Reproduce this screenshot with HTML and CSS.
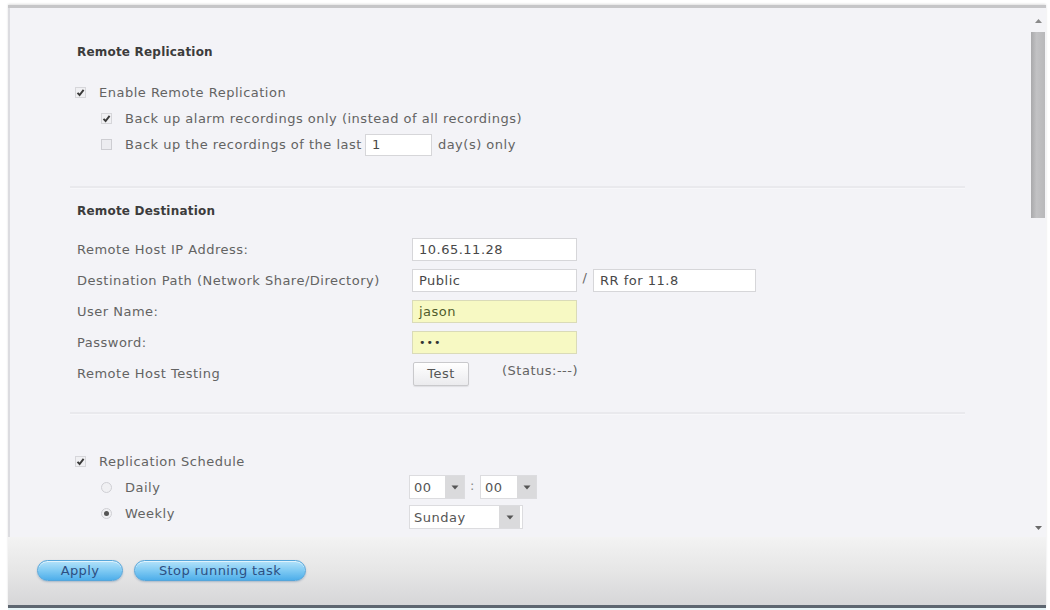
FILE: index.html
```html
<!DOCTYPE html>
<html>
<head>
<meta charset="utf-8">
<link rel="stylesheet" href="styles.css">
</head>
<body>
<div class="window">
  <div class="body">
    <div class="main">
      <section class="sec sec-rep">
        <h2 class="heading">Remote Replication</h2>
        <div class="opt">
          <span class="cb checked"><svg viewBox="0 0 11 11" width="11" height="11"><path d="M2.5 5.8 L4.6 8 L8.6 2.8" fill="none" stroke="#3a3a3a" stroke-width="1.9"/></svg></span>
          <span class="opt-text">Enable Remote Replication</span>
        </div>
        <div class="opt sub">
          <span class="cb checked"><svg viewBox="0 0 11 11" width="11" height="11"><path d="M2.5 5.8 L4.6 8 L8.6 2.8" fill="none" stroke="#3a3a3a" stroke-width="1.9"/></svg></span>
          <span class="opt-text">Back up alarm recordings only (instead of all recordings)</span>
        </div>
        <div class="opt sub opt-last">
          <span class="cb"></span>
          <span class="opt-text">Back up the recordings of the last</span>
          <span class="field days">1</span>
          <span class="opt-text after">day(s) only</span>
        </div>
      </section>

      <div class="divider"></div>

      <section class="sec sec-dest">
        <h2 class="heading">Remote Destination</h2>
        <div class="form-grid">
          <div class="label">Remote Host IP Address:</div>
          <div class="ctrl"><span class="field w165">10.65.11.28</span></div>

          <div class="label">Destination Path (Network Share/Directory)</div>
          <div class="ctrl"><span class="field w165">Public</span><span class="slash">/</span><span class="field w163">RR for 11.8</span></div>

          <div class="label">User Name:</div>
          <div class="ctrl"><span class="field w165 yellow">jason</span></div>

          <div class="label">Password:</div>
          <div class="ctrl"><span class="field w165 yellow dots">&bull;&bull;&bull;</span></div>

          <div class="label">Remote Host Testing</div>
          <div class="ctrl"><span class="btn-test">Test</span><span class="status">(Status:---)</span></div>
        </div>
      </section>

      <div class="divider"></div>

      <section class="sec sec-sched">
        <div class="opt">
          <span class="cb checked"><svg viewBox="0 0 11 11" width="11" height="11"><path d="M2.5 5.8 L4.6 8 L8.6 2.8" fill="none" stroke="#3a3a3a" stroke-width="1.9"/></svg></span>
          <span class="opt-text">Replication Schedule</span>
        </div>
        <div class="sched-grid">
          <div class="opt sub"><span class="radio"></span><span class="opt-text">Daily</span></div>
          <div class="ctrl sel-row">
            <span class="select s56"><span class="sel-val">00</span><span class="sel-arrow"><svg viewBox="0 0 8 5" width="8" height="5"><path d="M0.5 0.5 L4 4.5 L7.5 0.5 Z" fill="#555"/></svg></span></span>
            <span class="colon">:</span>
            <span class="select s57"><span class="sel-val">00</span><span class="sel-arrow"><svg viewBox="0 0 8 5" width="8" height="5"><path d="M0.5 0.5 L4 4.5 L7.5 0.5 Z" fill="#555"/></svg></span></span>
          </div>
          <div class="opt sub"><span class="radio on"></span><span class="opt-text">Weekly</span></div>
          <div class="ctrl sel-row">
            <span class="select s114"><span class="sel-val">Sunday</span><span class="sel-arrow"><svg viewBox="0 0 8 5" width="8" height="5"><path d="M0.5 0.5 L4 4.5 L7.5 0.5 Z" fill="#555"/></svg></span></span>
          </div>
        </div>
      </section>
    </div>
    <div class="scrollbar">
      <span class="sb-arrow"><svg viewBox="0 0 7 4" width="7" height="4"><path d="M0 4 L3.5 0 L7 4 Z" fill="#8a8a8a"/></svg></span>
      <div class="thumb"></div>
      <div class="track-rest"></div>
      <span class="sb-arrow"><svg viewBox="0 0 7 4" width="7" height="4"><path d="M0 0 L3.5 4 L7 0 Z" fill="#6a6a6a"/></svg></span>
    </div>
  </div>
  <div class="footer">
    <button class="pill apply">Apply</button>
    <button class="pill stop">Stop running task</button>
  </div>
</div>
</body>
</html>
```
FILE: styles.css
```css
html, body {
  margin: 0;
  padding: 0;
  background: #ffffff;
  width: 1050px;
  height: 610px;
  overflow: hidden;
}

body {
  font-family: "DejaVu Sans", Verdana, sans-serif;
  font-size: 13px;
  letter-spacing: 0.5px;
  color: #636363;
}

.window {
  margin: 5px 0 0 8px;
  width: 1038px;
  height: 600px;
  display: flex;
  flex-direction: column;
  border-top: 3px solid #c6c6c8;
  box-shadow: 0 -1px 2px rgba(0,0,0,0.12);
  background: #f3f3f7;
}

.body {
  flex: 1;
  display: flex;
  min-height: 0;
  border-left: 2px solid #dcdce0;
}

.main {
  flex: 1;
  padding: 34px 0 0 67px;
  overflow: hidden;
}

.heading {
  margin: 0;
  font-size: 12px;
  letter-spacing: 0.2px;
  font-weight: bold;
  color: #3c3c3c;
  line-height: 20px;
  height: 20px;
}

.sec-rep .heading { margin-bottom: 17px; }

.opt {
  display: flex;
  align-items: center;
  height: 26px;
}

.opt-last { height: 27px; }

.opt.sub { padding-left: 26px; }

.cb {
  width: 11px;
  height: 11px;
  box-sizing: border-box;
  border: 1px solid #cdcdd2;
  background: #ececf0;
  margin-left: -2px;
  margin-right: 13px;
  display: flex;
  flex: none;
}

.cb.checked { border-color: #d6d6da; background: #f0f0f3; }
.cb svg { display: block; margin: -1px; }

.radio {
  width: 11px;
  height: 11px;
  box-sizing: border-box;
  border-radius: 50%;
  border: 1px solid #cfcfd4;
  background: #f0f0f3;
  margin-left: -2px;
  margin-right: 13px;
  flex: none;
  display: flex;
  align-items: center;
  justify-content: center;
}

.radio.on::after {
  content: "";
  width: 5px;
  height: 5px;
  border-radius: 50%;
  background: #555;
}

.opt-text { white-space: nowrap; }
.opt-text.after { margin-left: 6px; }

.field {
  display: inline-flex;
  align-items: center;
  box-sizing: border-box;
  height: 23px;
  padding-left: 6px;
  background: #ffffff;
  border: 1px solid #d6d6d9;
  color: #484848;
  white-space: nowrap;
}

.field.days { width: 67px; height: 22px; margin-left: 3px; }
.field.w165 { width: 165px; }
.field.w163 { width: 163px; }
.field.yellow { background: #f7f9c3; border-color: #dadbb8; color: #505c2c; }
.field.dots { font-size: 11px; letter-spacing: 1px; color: #333; }

.slash { width: 16px; text-align: center; margin-top: -6px; color: #666; }

.divider {
  margin-left: -7px;
  width: 895px;
  height: 2px;
  background: #e9e9ed;
  border-bottom: 1px solid #f7f7fa;
}

.sec-rep + .divider { margin-top: 28px; }

.sec-dest { padding-top: 12px; }
.sec-dest .heading { margin-bottom: 13px; }

.form-grid {
  display: grid;
  grid-template-columns: 335px 1fr;
  grid-auto-rows: 31px;
}

.form-grid .label {
  display: flex;
  align-items: center;
  white-space: nowrap;
}

.ctrl {
  display: flex;
  align-items: center;
}

.btn-test {
  width: 56px;
  height: 24px;
  box-sizing: border-box;
  margin-left: 1px;
  border: 1px solid #c9c9cc;
  border-radius: 2px;
  background: linear-gradient(#ffffff, #ebebee);
  box-shadow: 0 1px 1px rgba(0,0,0,0.08);
  display: flex;
  align-items: center;
  justify-content: center;
  color: #555;
}

.status { margin-left: 33px; margin-top: -6px; }

.sec-dest + .divider { margin-top: 23px; }

.sec-sched { padding-top: 33px; }

.sched-grid {
  display: grid;
  grid-template-columns: 332px 1fr;
  grid-template-rows: 26px 30px;
}

.sel-row { align-items: center; }
.sched-grid .sel-row:last-child { align-items: flex-end; padding-bottom: 1px; }

.select {
  display: inline-flex;
  box-sizing: border-box;
  height: 24px;
  border: 1px solid #dcdcdf;
  background: #ffffff;
  color: #555;
}

.select.s56 { width: 56px; }
.select.s57 { width: 57px; }
.select.s114 { width: 114px; height: 24px; }

.sel-val {
  flex: 1;
  display: flex;
  align-items: center;
  padding-left: 4px;
}

.sel-arrow {
  width: 19px;
  background: #dadadc;
  display: flex;
  align-items: center;
  justify-content: center;
}

.s114 .sel-arrow { width: 21px; margin-right: 2px; }

.colon { width: 15px; text-align: center; color: #888; margin-top: -4px; }

.scrollbar {
  width: 16px;
  flex: none;
  display: flex;
  flex-direction: column;
  align-items: center;
  padding-top: 8px;
  background: #f4f4f7;
}

.sb-arrow { height: 10px; display: flex; align-items: center; }

.thumb {
  margin-top: 6px;
  width: 14px;
  height: 186px;
  background: linear-gradient(90deg, #a9a9ab, #c2c2c4 40%, #b8b8ba);
}

.track-rest { flex: 1; }

.scrollbar .sb-arrow:last-child { margin-bottom: 4px; }

.footer {
  height: 71px;
  flex: none;
  display: flex;
  align-items: center;
  gap: 11px;
  padding-left: 29px;
  padding-bottom: 1px;
  box-sizing: border-box;
  background: linear-gradient(#f3f3f3, #e6e6e6 50%, #d6d6d8);
  border-bottom: 3px solid #5e6670;
  box-shadow: 0 2px 0 #e6f4f7;
}

.pill {
  height: 21px;
  padding: 0;
  border-radius: 11px;
  border: 1px solid #56a6da;
  background: linear-gradient(#b4e2fa, #7fcaf3 50%, #4eaeea);
  box-shadow: 0 1px 2px rgba(0,60,120,0.25), inset 0 1px 0 rgba(255,255,255,0.6);
  color: #2d4f82;
  font-family: "DejaVu Sans", Verdana, sans-serif;
  font-size: 13px;
  letter-spacing: 0.4px;
  line-height: 19px;
}

.pill.apply { width: 86px; }
.pill.stop { width: 172px; }
```
